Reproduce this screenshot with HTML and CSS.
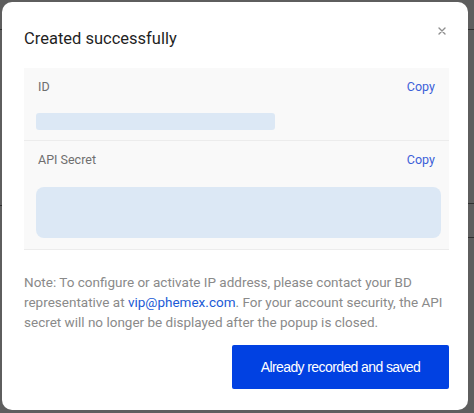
FILE: index.html
```html
<!DOCTYPE html>
<html>
<head>
<meta charset="utf-8">
<link rel="stylesheet" href="styles.css">
</head>
<body>
<div class="backdrop">
  <span class="bd-line l1"></span>
  <span class="bd-line l2"></span>
  <span class="bd-line r1"></span>
  <span class="bd-line r2"></span>
  <span class="bd-line r3"></span>
  <div class="modal">
    <div class="header">
      <h1 class="title">Created successfully</h1>
      <button class="close" aria-label="close">
        <svg width="8" height="8" viewBox="0 0 8 8"><path d="M1 1L7 7M7 1L1 7" stroke="#8f8f8f" stroke-width="1.4" stroke-linecap="round"/></svg>
      </button>
    </div>
    <div class="panel">
      <div class="row row-id">
        <div class="row-head">
          <span class="label">ID</span>
          <a class="copy">Copy</a>
        </div>
        <div class="value value-id"></div>
      </div>
      <div class="row row-secret">
        <div class="row-head">
          <span class="label">API Secret</span>
          <a class="copy">Copy</a>
        </div>
        <div class="value value-secret"></div>
      </div>
    </div>
    <p class="note">Note: To configure or activate IP address, please contact your BD representative at <a class="mail">vip@phemex.com</a>. For your account security, the API secret will no longer be displayed after the popup is closed.</p>
    <div class="actions">
      <button class="primary">Already recorded and saved</button>
    </div>
  </div>
</div>
</body>
</html>
```
FILE: styles.css
```css
html, body {
  margin: 0;
  padding: 0;
}
body {
  background: #5c5c5c;
  font-family: Roboto, "Noto Sans", sans-serif;
}
.backdrop {
  position: relative;
  width: 474px;
  height: 413px;
  padding: 2px 6px 3px 2px;
  box-sizing: border-box;
  background: #5e5e5e;
}
.bd-line {
  position: absolute;
  height: 1px;
  background: #2f2f2f;
}
.l1 { left: 0; top: 29px; width: 2px; }
.l2 { left: 0; top: 205px; width: 2px; }
.r1 { right: 0; top: 29px; width: 6px; }
.r2 { right: 0; top: 203px; width: 6px; }
.r3 { right: 0; top: 237px; width: 6px; }
.modal {
  background: #fff;
  border-radius: 10px;
  height: 408px;
  box-sizing: border-box;
  padding: 0 19px 0 22px;
  display: flex;
  flex-direction: column;
}
.header {
  display: flex;
  justify-content: space-between;
  align-items: flex-start;
  height: 66px;
}
.title {
  margin: 25px 0 0 0;
  font-size: 16.5px;
  line-height: 24px;
  font-weight: 400;
  color: #1f1f1f;
}
.close {
  border: 0;
  background: none;
  padding: 0;
  margin: 25px 3px 0 0;
  width: 8px;
  height: 8px;
  display: flex;
}
.panel {
  background: #f9f9f9;
  border-bottom: 1px solid #ececec;
}
.row {
  padding: 0 14px 0 12px;
}
.row-id {
  height: 73px;
  border-bottom: 1px solid #ececec;
  box-sizing: border-box;
}
.row-secret {
  height: 108px;
  box-sizing: border-box;
  padding-right: 8px;
}
.row-head {
  display: flex;
  justify-content: space-between;
  padding: 9px 0 0 2px;
  height: 38px;
  box-sizing: border-box;
  font-size: 12.5px;
  line-height: 20px;
}
.row-secret .row-head {
  padding-right: 6px;
  height: 46px;
  padding-top: 9px;
}
.label {
  color: #6f6f6f;
}
.copy {
  color: #3c5fd8;
  cursor: pointer;
}
.value {
  background: #dce8f5;
}
.value-id {
  width: 239px;
  height: 17px;
  margin-top: 7px;
  border-radius: 3px;
}
.value-secret {
  height: 51px;
  border-radius: 8px;
}
.note {
  margin: 22px 0 0 0;
  font-size: 13.5px;
  line-height: 20px;
  color: #8a8a8a;
}
.mail {
  color: #1c5bd6;
}
.actions {
  display: flex;
  justify-content: flex-end;
  margin-top: 13px;
}
.primary {
  width: 217px;
  height: 44px;
  border: 0;
  border-radius: 2px;
  background: #0141e2;
  color: #fff;
  font-family: "Liberation Sans", Arial, sans-serif;
  font-size: 14px;
  letter-spacing: -0.6px;
  padding: 0;
}
```
